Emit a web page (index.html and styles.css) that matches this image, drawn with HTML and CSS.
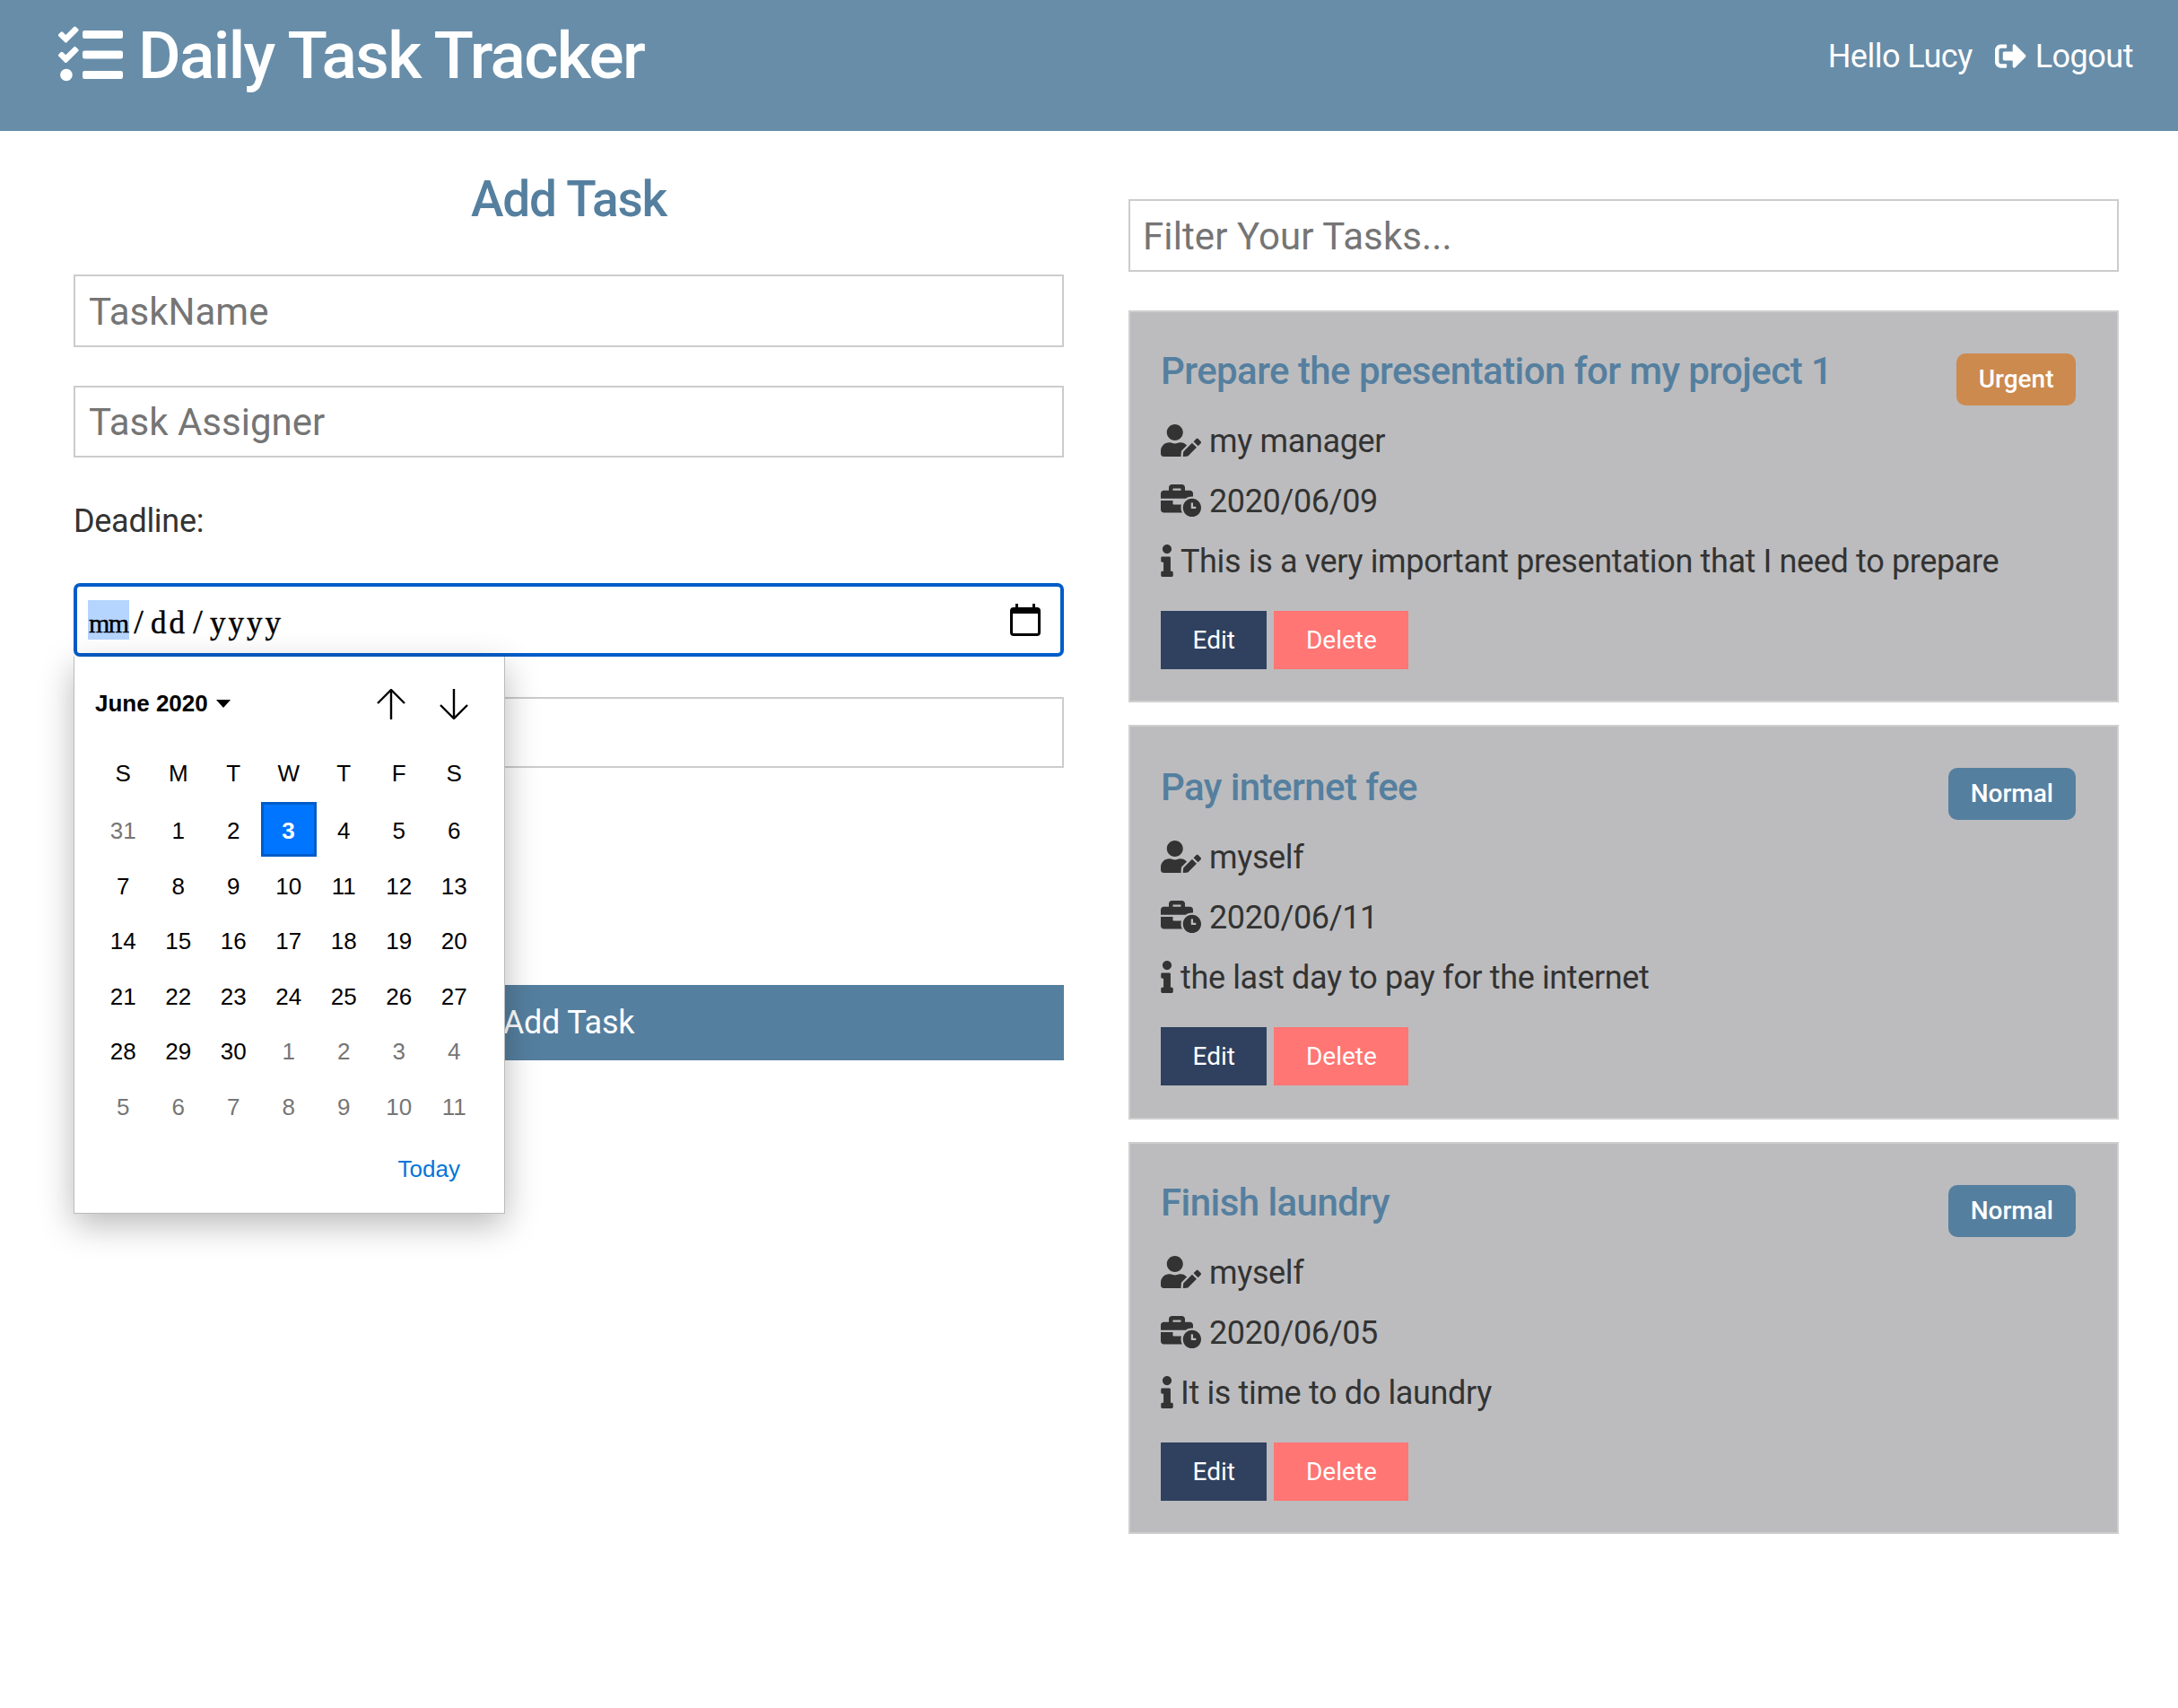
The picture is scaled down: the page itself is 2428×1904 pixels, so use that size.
FILE: index.html
```html
<!DOCTYPE html>
<html lang="en">
<head>
    <meta charset="UTF-8">
    <meta name="viewport" content="width=device-width, initial-scale=1.0">
    <title>Daily Task Tracker</title>
    <link rel="stylesheet" href="styles.css">
</head>
<body>
    <svg class="defs" xmlns="http://www.w3.org/2000/svg">
        <symbol id="i-user-edit" viewBox="0 0 640 512"><path d="M224 256c70.7 0 128-57.3 128-128S294.7 0 224 0 96 57.3 96 128s57.3 128 128 128zm89.6 32h-16.7c-22.2 10.2-46.9 16-72.9 16s-50.6-5.8-72.9-16h-16.7C60.2 288 0 348.2 0 422.4V464c0 26.5 21.5 48 48 48h274.9c-2.4-6.8-3.4-14-2.6-21.3l6.8-60.9 1.2-11.1 7.9-7.9 77.3-77.3c-24.5-27.7-60-45.5-99.9-45.5zm45.3 145.3l-6.8 61c-1.1 10.2 7.5 18.8 17.6 17.6l60.9-6.8 137.9-137.9-71.7-71.7-137.9 137.8zM633 268.9L595.1 231c-9.3-9.3-24.5-9.3-33.8 0l-37.8 37.8-4.1 4.1 71.8 71.7 41.8-41.8c9.3-9.4 9.3-24.5 0-33.9z"/></symbol>
        <symbol id="i-business-time" viewBox="0 0 640 512"><path d="M496 224c-79.59 0-144 64.41-144 144s64.41 144 144 144 144-64.41 144-144-64.41-144-144-144zm64 150.29c0 5.34-4.37 9.71-9.71 9.71h-60.57c-5.34 0-9.71-4.37-9.71-9.71v-76.57c0-5.34 4.37-9.71 9.71-9.71h12.57c5.34 0 9.71 4.37 9.71 9.71V352h38.29c5.34 0 9.71 4.37 9.71 9.71v12.58zM496 192c5.4 0 10.72.33 16 .81V144c0-25.6-22.4-48-48-48h-80V48c0-25.6-22.4-48-48-48H176c-25.6 0-48 22.4-48 48v48H48c-25.6 0-48 22.4-48 48v80h395.12c28.6-20.09 63.35-32 100.88-32zM320 96H192V64h128v32zm6.82 224H208c-8.84 0-16-7.16-16-16v-48H0v144c0 25.6 22.4 48 48 48h291.43C327.1 423.96 320 396.82 320 368c0-16.66 2.48-32.72 6.82-48z"/></symbol>
        <symbol id="i-info" viewBox="0 0 192 512"><path d="M20 424.229h20V279.771H20c-11.046 0-20-8.954-20-20V212c0-11.046 8.954-20 20-20h112c11.046 0 20 8.954 20 20v212.229h20c11.046 0 20 8.954 20 20V492c0 11.046-8.954 20-20 20H20c-11.046 0-20-8.954-20-20v-47.771c0-11.046 8.954-20 20-20zM96 0C56.235 0 24 32.235 24 72s32.235 72 72 72 72-32.235 72-72S135.764 0 96 0z"/></symbol>
    </svg>

    <header class="topbar">
        <div class="brand">
            <svg class="brand-icon" viewBox="0 0 512 512"><path d="M139.61 35.5a12 12 0 0 0-17 0L58.93 98.81l-22.7-22.12a12 12 0 0 0-17 0L3.53 92.41a12 12 0 0 0 0 17l47.59 47.4a12.78 12.78 0 0 0 17.61 0l15.59-15.62L156.52 69a12.09 12.09 0 0 0 .09-17zm0 159.19a12 12 0 0 0-17 0l-63.68 63.72-22.7-22.1a12 12 0 0 0-17 0L3.53 252a12 12 0 0 0 0 17L51 316.5a12.77 12.77 0 0 0 17.6 0l15.7-15.69 72.2-72.22a12 12 0 0 0 .09-16.9zM64 368c-26.49 0-48.59 21.5-48.59 48S37.53 464 64 464a48 48 0 0 0 0-96zm432 16H208a16 16 0 0 0-16 16v32a16 16 0 0 0 16 16h288a16 16 0 0 0 16-16v-32a16 16 0 0 0-16-16zm0-320H208a16 16 0 0 0-16 16v32a16 16 0 0 0 16 16h288a16 16 0 0 0 16-16V80a16 16 0 0 0-16-16zm0 160H208a16 16 0 0 0-16 16v32a16 16 0 0 0 16 16h288a16 16 0 0 0 16-16v-32a16 16 0 0 0-16-16z"/></svg>
            <h1>Daily Task Tracker</h1>
        </div>
        <div class="account">
            <span>Hello Lucy</span>
            <a class="logout" href="#">
                <svg class="logout-icon" viewBox="0 0 512 512"><path d="M497 273L329 441c-15 15-41 4.5-41-17v-96H152c-13.3 0-24-10.7-24-24v-96c0-13.3 10.7-24 24-24h136V88c0-21.4 25.9-32 41-17l168 168c9.3 9.4 9.3 24.6 0 34zM192 436v-40c0-6.6-5.4-12-12-12H96c-17.7 0-32-14.3-32-32V160c0-17.7 14.3-32 32-32h84c6.6 0 12-5.4 12-12V76c0-6.6-5.4-12-12-12H96c-53 0-96 43-96 96v192c0 53 43 96 96 96h84c6.6 0 12-5.4 12-12z"/></svg>
                Logout
            </a>
        </div>
    </header>

    <main class="layout">
        <section class="add-form">
            <h2>Add Task</h2>
            <input class="field field-name" type="text" placeholder="TaskName">
            <input class="field field-assigner" type="text" placeholder="Task Assigner">
            <label class="deadline-label">Deadline:</label>

            <div class="date-wrap">
                <div class="date-field">
                    <span class="seg seg-mm">mm</span><span class="sep">/</span><span class="seg seg-dd">dd</span><span class="sep">/</span><span class="seg seg-yy">yyyy</span>
                    <svg class="date-icon" viewBox="0 0 34 36"><path d="M6 0h3v4h16V0h3v4h2a4 4 0 0 1 4 4v24a4 4 0 0 1-4 4H4a4 4 0 0 1-4-4V8a4 4 0 0 1 4-4h2zM3 11v21a1 1 0 0 0 1 1h26a1 1 0 0 0 1-1V11z"/></svg>
                </div>

                <div class="picker">
                    <div class="picker-head">
                        <span class="picker-month">June 2020</span>
                        <span class="picker-caret"></span>
                        <svg class="picker-arrow picker-up" viewBox="0 0 32 34"><path d="M16 34V1M1 16 16 1l15 15"/></svg>
                        <svg class="picker-arrow picker-down" viewBox="0 0 32 34"><path d="M16 0v33M1 18l15 15 15-15"/></svg>
                    </div>
                    <div class="picker-grid">
                        <span>S</span><span>M</span><span>T</span><span>W</span><span>T</span><span>F</span><span>S</span>
                        <span class="off">31</span><span>1</span><span>2</span><span class="sel">3</span><span>4</span><span>5</span><span>6</span>
                        <span>7</span><span>8</span><span>9</span><span>10</span><span>11</span><span>12</span><span>13</span>
                        <span>14</span><span>15</span><span>16</span><span>17</span><span>18</span><span>19</span><span>20</span>
                        <span>21</span><span>22</span><span>23</span><span>24</span><span>25</span><span>26</span><span>27</span>
                        <span>28</span><span>29</span><span>30</span><span class="off">1</span><span class="off">2</span><span class="off">3</span><span class="off">4</span>
                        <span class="off">5</span><span class="off">6</span><span class="off">7</span><span class="off">8</span><span class="off">9</span><span class="off">10</span><span class="off">11</span>
                    </div>
                    <div class="picker-foot"><a href="#">Today</a></div>
                </div>
            </div>

            <input class="field field-desc" type="text">
            <button class="add-btn">Add Task</button>
        </section>

        <section class="task-list">
            <input class="field field-filter" type="text" placeholder="Filter Your Tasks...">

            <article class="card">
                <div class="card-head">
                    <h3>Prepare the presentation for my project 1</h3>
                    <span class="badge badge-urgent">Urgent</span>
                </div>
                <p class="row"><svg class="ico"><use href="#i-user-edit"/></svg>my manager</p>
                <p class="row"><svg class="ico"><use href="#i-business-time"/></svg>2020/06/09</p>
                <p class="row row-info"><svg class="ico-info"><use href="#i-info"/></svg>This is a very important presentation that I need to prepare</p>
                <div class="actions">
                    <button class="btn btn-edit">Edit</button>
                    <button class="btn btn-delete">Delete</button>
                </div>
            </article>

            <article class="card card-tall">
                <div class="card-head">
                    <h3>Pay internet fee</h3>
                    <span class="badge">Normal</span>
                </div>
                <p class="row"><svg class="ico"><use href="#i-user-edit"/></svg>myself</p>
                <p class="row"><svg class="ico"><use href="#i-business-time"/></svg>2020/06/11</p>
                <p class="row row-info"><svg class="ico-info"><use href="#i-info"/></svg>the last day to pay for the internet</p>
                <div class="actions">
                    <button class="btn btn-edit">Edit</button>
                    <button class="btn btn-delete">Delete</button>
                </div>
            </article>

            <article class="card">
                <div class="card-head">
                    <h3>Finish laundry</h3>
                    <span class="badge">Normal</span>
                </div>
                <p class="row"><svg class="ico"><use href="#i-user-edit"/></svg>myself</p>
                <p class="row"><svg class="ico"><use href="#i-business-time"/></svg>2020/06/05</p>
                <p class="row row-info"><svg class="ico-info"><use href="#i-info"/></svg>It is time to do laundry</p>
                <div class="actions">
                    <button class="btn btn-edit">Edit</button>
                    <button class="btn btn-delete">Delete</button>
                </div>
            </article>
        </section>
    </main>
</body>
</html>
```

FILE: styles.css
```css
:root {
    --header: #678da9;
    --blue: #557f9f;
    --card: #bcbcbe;
    --text: #333333;
}
* {
    box-sizing: border-box;
}
body {
    margin: 0;
    background: #ffffff;
    color: var(--text);
    font-family: Roboto, "Liberation Sans", sans-serif;
}
.defs {
    display: none;
}

/* top bar */
.topbar {
    display: flex;
    justify-content: space-between;
    height: 146px;
    padding: 25px 50px 0 65px;
    background: var(--header);
    color: #ffffff;
}
.brand {
    display: flex;
    gap: 17px;
}
.brand-icon {
    width: 72px;
    height: 72px;
    fill: #ffffff;
}
.brand h1 {
    margin: 1px 0 0;
    font-size: 73px;
    font-weight: 500;
    letter-spacing: -1.65px;
    line-height: 1;
}
.account {
    display: flex;
    gap: 25px;
    margin-top: 20px;
    font-size: 36px;
    letter-spacing: -0.5px;
    line-height: 36px;
}
.logout {
    display: flex;
    gap: 10px;
    color: #ffffff;
    text-decoration: none;
}
.logout-icon {
    width: 35px;
    height: 35px;
    fill: #ffffff;
}

/* two columns */
.layout {
    display: grid;
    grid-template-columns: 1104px 1104px;
    gap: 72px;
    padding: 49px 66px 0 82px;
}
.add-form h2 {
    margin: 0;
    color: var(--blue);
    font-size: 55px;
    font-weight: 500;
    letter-spacing: -1.15px;
    line-height: 55px;
    text-align: center;
}
.field {
    display: block;
    width: 100%;
    height: 81px;
    padding: 2px 15px 0;
    border: 2px solid #cccccc;
    background: #ffffff;
    color: var(--text);
    font-family: inherit;
    font-size: 42px;
    outline: none;
}
.field::placeholder {
    color: #757575;
    opacity: 1;
}
.field-name {
    margin-top: 56px;
}
.field-assigner {
    height: 80px;
    margin-top: 43px;
    padding-top: 0;
}
.deadline-label {
    display: block;
    margin-top: 53px;
    font-size: 36px;
    letter-spacing: -0.3px;
    line-height: 36px;
}

/* date input and its open popup */
.date-wrap {
    position: relative;
    margin-top: 51px;
}
.date-field {
    display: flex;
    align-items: center;
    height: 82px;
    padding: 0 22px 0 12px;
    border: 4px solid #005cc8;
    border-radius: 7px;
    color: #000000;
    font-family: "Liberation Serif", serif;
    font-size: 35px;
    -webkit-text-stroke: 0.4px #000000;
}
.seg {
    height: 44px;
    padding: 6px 3px 0;
    line-height: 39px;
}
.seg-mm {
    width: 46px;
    padding-left: 1px;
    background: #b5d5ff;
    font-size: 30px;
    letter-spacing: -1.5px;
}
.seg-dd {
    width: 45px;
    letter-spacing: 3px;
}
.seg-yy {
    width: 88px;
    letter-spacing: 3px;
}
.sep {
    width: 21px;
    padding-top: 4px;
    font-size: 38px;
    font-weight: 400;
    line-height: 39px;
    text-align: center;
}
.date-icon {
    width: 34px;
    height: 36px;
    margin-left: auto;
    fill: #000000;
}
.picker {
    position: absolute;
    top: 82px;
    left: 0;
    z-index: 2;
    width: 481px;
    height: 621px;
    border: 1px solid #bbbbbb;
    border-top: 0;
    background: #ffffff;
    box-shadow: 0 12px 36px rgba(0, 0, 0, 0.28);
    color: #000000;
    font-family: "Liberation Sans", Arial, sans-serif;
    font-size: 26px;
}
.picker-head {
    display: flex;
    align-items: center;
    height: 100px;
    padding: 0 40px 0 23px;
}
.picker-month {
    font-weight: 700;
    margin-top: 4px;
}
.picker-caret {
    width: 0;
    height: 0;
    margin: 4px 0 0 9px;
    border-left: 8px solid transparent;
    border-right: 8px solid transparent;
    border-top: 9px solid #000000;
}
.picker-arrow {
    width: 32px;
    height: 34px;
    margin-top: 6px;
    fill: none;
    stroke: #000000;
    stroke-width: 2.4;
}
.picker-up {
    margin-left: auto;
}
.picker-down {
    margin-left: 38px;
}
.picker-grid {
    display: grid;
    grid-template-columns: repeat(7, 61.5px);
    grid-auto-rows: 61.5px;
    margin-left: 23.5px;
}
.picker-grid span {
    display: flex;
    align-items: center;
    justify-content: center;
    padding-top: 5px;
}
.picker-grid span:nth-child(-n+7) {
    padding-top: 0;
}
.picker-grid .off {
    color: #767676;
}
.picker-grid .sel {
    margin-left: -0.5px;
    border: 3px solid #005cc8;
    background: #0075ff;
    color: #ffffff;
    font-weight: 700;
}
.picker-foot {
    padding: 25px 49px 0 0;
    text-align: right;
}
.picker-foot a {
    color: #0075d9;
    text-decoration: none;
}

.field-desc {
    margin-top: 45px;
    height: 79px;
}
.add-btn {
    display: block;
    width: 100%;
    height: 84px;
    margin-top: 242px;
    border: none;
    background: var(--blue);
    color: #ffffff;
    font-family: inherit;
    font-size: 36px;
    letter-spacing: -0.2px;
}

/* task cards */
.field-filter {
    margin-top: 27px;
    padding-left: 14px;
    letter-spacing: 0.1px;
}
.card {
    height: 437px;
    margin-top: 25px;
    padding: 45px 35px 0 34px;
    border: 2px solid #cfcfcf;
    background: var(--card);
}
.card-tall {
    height: 440px;
    padding-top: 47px;
}
.card-tall .badge {
    margin-top: -1px;
}
.field-filter + .card {
    margin-top: 43px;
}
.card-head {
    display: flex;
    justify-content: space-between;
    align-items: flex-start;
    height: 58px;
    margin-bottom: 22px;
    padding-right: 11px;
}
.card-head h3 {
    margin: 0;
    color: var(--blue);
    font-size: 42px;
    font-weight: 500;
    letter-spacing: -0.56px;
    line-height: 1;
}
.badge {
    height: 58px;
    margin-top: 1px;
    padding: 0 25px;
    border-radius: 10px;
    background: var(--blue);
    color: #ffffff;
    font-size: 28px;
    font-weight: 500;
    line-height: 58px;
}
.badge-urgent {
    padding: 0 24.5px;
    background: #cc8a4e;
}
.row {
    display: flex;
    height: 36px;
    margin: 0 0 31px;
    font-size: 36px;
    letter-spacing: -0.36px;
    line-height: 39px;
}
.row-info {
    margin-bottom: 38px;
}
.ico {
    width: 45px;
    height: 36px;
    margin-right: 9px;
    fill: var(--text);
}
.ico-info {
    width: 14px;
    height: 36px;
    margin-right: 8px;
    fill: var(--text);
}
.actions {
    display: flex;
    gap: 8px;
}
.btn {
    height: 65px;
    padding: 0 35.5px;
    border: none;
    color: #ffffff;
    font-family: inherit;
    font-size: 28px;
}
.btn-edit {
    background: #2f415f;
}
.btn-delete {
    background: #ff7675;
}
```
